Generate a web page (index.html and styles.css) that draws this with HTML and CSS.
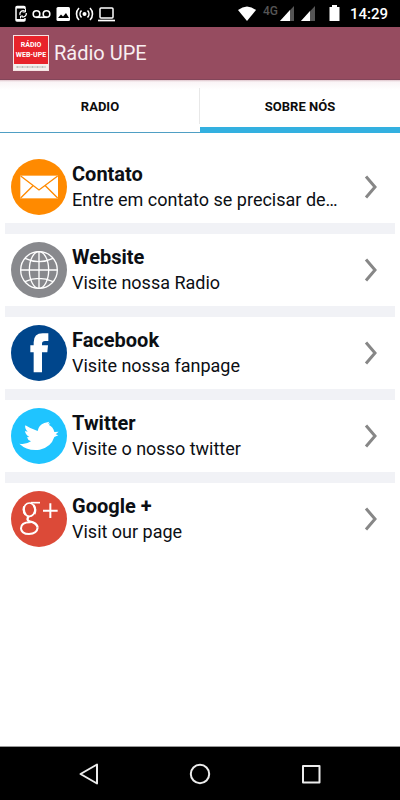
FILE: index.html
```html
<!DOCTYPE html>
<html lang="pt-BR">
<head>
<meta charset="utf-8">
<meta name="viewport" content="width=device-width, initial-scale=1">
<title>Rádio UPE</title>
<link rel="stylesheet" href="styles.css">
</head>
<body>
<div class="status">
  <svg class="status-left" viewBox="0 0 104 18" aria-hidden="true">
    <g fill="none" stroke="#fff">
      <path d="M11 4V2.500Q11 1.500 10 1.500H3Q2 1.500 2 2.500V15Q2 16 3 16H10Q11 16 11 15V13" stroke-width="1.500"/>
      <path d="M2 2.500H11M2 15H11" stroke-width="2"/>
      <path d="M6 10A3.300 3.300 0 0 1 11 6.300M12.300 8A3.300 3.300 0 0 1 7.500 11.500" stroke-width="1.300"/>
      <path d="M11.500 4V7H8.500M6.500 13.500V11H9" stroke-width="1"/>
      <circle cx="22.500" cy="9" r="3.300" stroke-width="1.600"/>
      <circle cx="32.500" cy="9" r="3.300" stroke-width="1.600"/>
      <path d="M22 12.300H33" stroke-width="1.600"/>
      <path d="M67.500 5.500A5 5 0 0 0 67.500 12.500M73.500 5.500A5 5 0 0 1 73.500 12.500M65 3A8.500 8.500 0 0 0 65 15M76 3A8.500 8.500 0 0 1 76 15" stroke-width="1.600"/>
      <rect x="86" y="3" width="13" height="10" rx="1" stroke-width="1.500"/>
      <path d="M84 15.500H101" stroke-width="1.700"/>
    </g>
    <circle cx="70.500" cy="9" r="2" fill="#fff"/>
    <rect x="42.500" y="2" width="13.500" height="14" rx="1.500" fill="#fff"/>
    <path d="M44 13L47 9.500L49 11.500L52 8L55 13Z" fill="#000"/>
  </svg>
  <div class="status-right">
    <svg class="wifi" viewBox="0 0 20 16" aria-hidden="true"><path d="M1 4Q10-3 19 4L10 15Z" fill="#fff"/></svg>
    <span class="net">4G</span>
    <svg class="signals" viewBox="0 0 60 18" aria-hidden="true">
      <path d="M0 16H14V1Z" fill="#555"/><path d="M0 16H10V5Z" fill="#fff"/>
      <path d="M21 16H35V1Z" fill="#555"/><path d="M21 16H30V6Z" fill="#fff"/>
      <path d="M50 2H52V0H57V2H59.500V16H49.500V2Z" fill="#fff"/>
    </svg>
    <span class="clock">14:29</span>
  </div>
</div>

<header class="appbar">
  <div class="logo"><div class="logo-name">RÁDIO<br>WEB-UPE</div><svg class="logo-line" viewBox="0 0 33 6" aria-hidden="true"><path d="M2 3H31" stroke="#aaa" stroke-width="1.500" stroke-dasharray="2 1 1 1"/></svg></div>
  <h1>Rádio UPE</h1>
</header>

<nav class="tabs">
  <button class="tab" type="button">RADIO</button>
  <button class="tab active" type="button">SOBRE NÓS</button>
</nav>

<main class="list">
  <a class="item" href="#contato">
    <svg class="badge" viewBox="33 54 168 168" aria-hidden="true">
      <circle cx="117" cy="138" r="84" fill="#ff8a00"/>
      <rect x="61" y="104" width="113" height="68" fill="#fff"/>
      <path d="M62 105L117 147L173 105M62 171L99 134M173 171L136 134" fill="none" stroke="#ff8a00" stroke-width="4"/>
    </svg>
    <span class="text"><strong>Contato</strong><span class="sub">Entre em contato se precisar de…</span></span>
    <svg class="chevron" viewBox="0 0 14 24" aria-hidden="true"><path d="M2 1.500L11 12L2 22.500"/></svg>
  </a>
  <a class="item" href="#website">
    <svg class="badge" viewBox="33 305 168 168" aria-hidden="true">
      <circle cx="117" cy="389" r="84" fill="#88898d"/>
      <g fill="none" stroke="#fff" stroke-width="4">
        <circle cx="117" cy="389" r="55"/>
        <ellipse cx="117" cy="389" rx="29" ry="55"/>
        <path d="M117 334V444M62 389H172M75 354Q117 374 159 354M75 424Q117 404 159 424"/>
      </g>
    </svg>
    <span class="text"><strong>Website</strong><span class="sub">Visite nossa Radio</span></span>
    <svg class="chevron" viewBox="0 0 14 24" aria-hidden="true"><path d="M2 1.500L11 12L2 22.500"/></svg>
  </a>
  <a class="item" href="#facebook">
    <svg class="badge" viewBox="33 44 168 168" aria-hidden="true">
      <circle cx="117" cy="128" r="84" fill="#00468c"/>
      <path d="M101 186V126H91V105H101V96Q101 69 128 69H145V92H135Q126 92 126 100V105H144L142 126H126V186Z" fill="#fff"/>
    </svg>
    <span class="text"><strong>Facebook</strong><span class="sub">Visite nossa fanpage</span></span>
    <svg class="chevron" viewBox="0 0 14 24" aria-hidden="true"><path d="M2 1.500L11 12L2 22.500"/></svg>
  </a>
  <a class="item" href="#twitter">
    <svg class="badge" viewBox="33 294 168 168" aria-hidden="true">
      <circle cx="117" cy="378" r="84" fill="#1fc4ff"/>
      <path d="M58 401Q77 405 93 394Q83 391 81 382L88 381Q76 374 75 363L83 365Q73 355 76 346Q91 356 113 363Q116 345 133 339L148 335L144 341L151 340L147 345Q160 351 163 366L176 365L167 373L175 376L163 381Q153 412 119 419Q82 424 58 401Z" fill="#fff"/>
    </svg>
    <span class="text"><strong>Twitter</strong><span class="sub">Visite o nosso twitter</span></span>
    <svg class="chevron" viewBox="0 0 14 24" aria-hidden="true"><path d="M2 1.500L11 12L2 22.500"/></svg>
  </a>
  <a class="item" href="#google">
    <svg class="badge" viewBox="33 65 168 168" aria-hidden="true">
      <circle cx="117" cy="149" r="84" fill="#dc4a38"/>
      <g fill="none" stroke="#fff">
        <ellipse cx="88" cy="121" rx="17" ry="20" stroke-width="5"/>
        <path d="M73 111Q68 124 77 136M101 107Q109 120 103 134" stroke-width="7"/>
        <path d="M92 100H120" stroke-width="5"/>
        <path d="M86 142Q78 151 88 156Q111 160 113 175" stroke-width="7"/>
        <path d="M92 159Q64 158 63 177Q64 194 87 194Q111 193 113 175" stroke-width="6"/>
        <path d="M129 124H173M151 102V146" stroke-width="6"/>
      </g>
    </svg>
    <span class="text"><strong>Google +</strong><span class="sub">Visit our page</span></span>
    <svg class="chevron" viewBox="0 0 14 24" aria-hidden="true"><path d="M2 1.500L11 12L2 22.500"/></svg>
  </a>
</main>

<footer class="navbar">
  <button type="button" aria-label="Voltar"><svg viewBox="0 0 24 24"><path d="M20 2.500V21.500L3.500 12Z"/></svg></button>
  <button type="button" aria-label="Início"><svg viewBox="0 0 24 24"><circle cx="12" cy="12" r="9.200"/></svg></button>
  <button type="button" aria-label="Recentes"><svg viewBox="0 0 24 24"><rect x="4" y="4" width="16.500" height="16.500"/></svg></button>
</footer>
</body>
</html>
```
FILE: styles.css
```css
* { box-sizing: border-box; }

body {
  margin: 0;
  min-height: 100vh;
  display: flex;
  flex-direction: column;
  background: #fff;
  color: #0c0f14;
  font-family: Roboto, "Liberation Sans", sans-serif;
}

svg { display: block; flex: none; }

.status {
  display: flex;
  justify-content: space-between;
  align-items: center;
  height: 27px;
  padding: 0 12px 0 14px;
  background: #000;
  color: #fff;
}
.status-left { width: 104px; height: 18px; }
.status-right { display: flex; align-items: center; }
.wifi { width: 20px; height: 16px; margin-right: 6px; }
.net {
  align-self: flex-start;
  width: 17px;
  font-size: 12px;
  line-height: 12px;
  font-weight: 500;
  color: #555;
}
.signals { width: 60px; height: 18px; margin-right: 10px; }
.clock { font-size: 15px; line-height: 18px; font-weight: 500; }

.appbar {
  display: flex;
  align-items: center;
  gap: 5px;
  height: 53px;
  padding: 0 13px;
  background: #964c60;
  border-bottom: 1px solid #83465a;
}
.logo {
  width: 36px;
  height: 36px;
  border: 1px solid #f6e4e4;
  background: #f4f0ee;
}
.logo-name {
  height: 28px;
  padding-top: 4px;
  background: #e8232b;
  color: #fff;
  font: bold 7px/10px Roboto, sans-serif;
  text-align: center;
  white-space: nowrap;
}
.logo-line { width: 100%; height: 6px; }
h1 {
  margin: 0;
  font-size: 20px;
  line-height: 28px;
  font-weight: 400;
  color: #f8eef1;
}

.tabs {
  display: flex;
  height: 53px;
  background: linear-gradient(#dfc3cb, #faf4f6 2px, #fff 10px);
}
.tab {
  flex: 1;
  padding: 2px 0 0;
  border: 0;
  border-bottom: 1px solid #4f9fc4;
  background: linear-gradient(#e8e8e8, #e8e8e8) right 8px / 1px 36px no-repeat;
  color: #0c0c0c;
  font: bold 13px/16px Roboto, sans-serif;
}
.tab.active {
  padding-top: 7px;
  border-bottom: 6px solid #33b0e0;
  background: none;
}

.list { flex: 1; padding: 18px 5px 0; }
.item {
  display: flex;
  align-items: center;
  height: 83px;
  padding: 0 17px 0 6px;
  border-bottom: 11px solid #f1f2f6;
  color: inherit;
  text-decoration: none;
}
.item:last-child { border-bottom-color: transparent; }
.badge { width: 56px; height: 56px; }
.text {
  flex: 1;
  min-width: 0;
  padding: 0 20px 0 5px;
}
.text strong, .sub {
  display: block;
  line-height: 25px;
  white-space: nowrap;
}
.text strong { font-size: 20px; font-weight: 700; }
.sub {
  font-size: 18px;
  overflow: hidden;
  text-overflow: ellipsis;
}
.chevron { width: 14px; height: 24px; }
.chevron path { fill: none; stroke: #878787; stroke-width: 3; }

.navbar {
  display: flex;
  justify-content: center;
  gap: 87px;
  height: 54px;
  border-top: 1px solid #999;
  background: #000;
}
.navbar button {
  display: flex;
  align-items: center;
  padding: 0;
  border: 0;
  background: none;
}
.navbar svg {
  width: 24px;
  height: 24px;
  fill: none;
  stroke: #ececec;
  stroke-width: 2;
  stroke-linejoin: round;
}
```
